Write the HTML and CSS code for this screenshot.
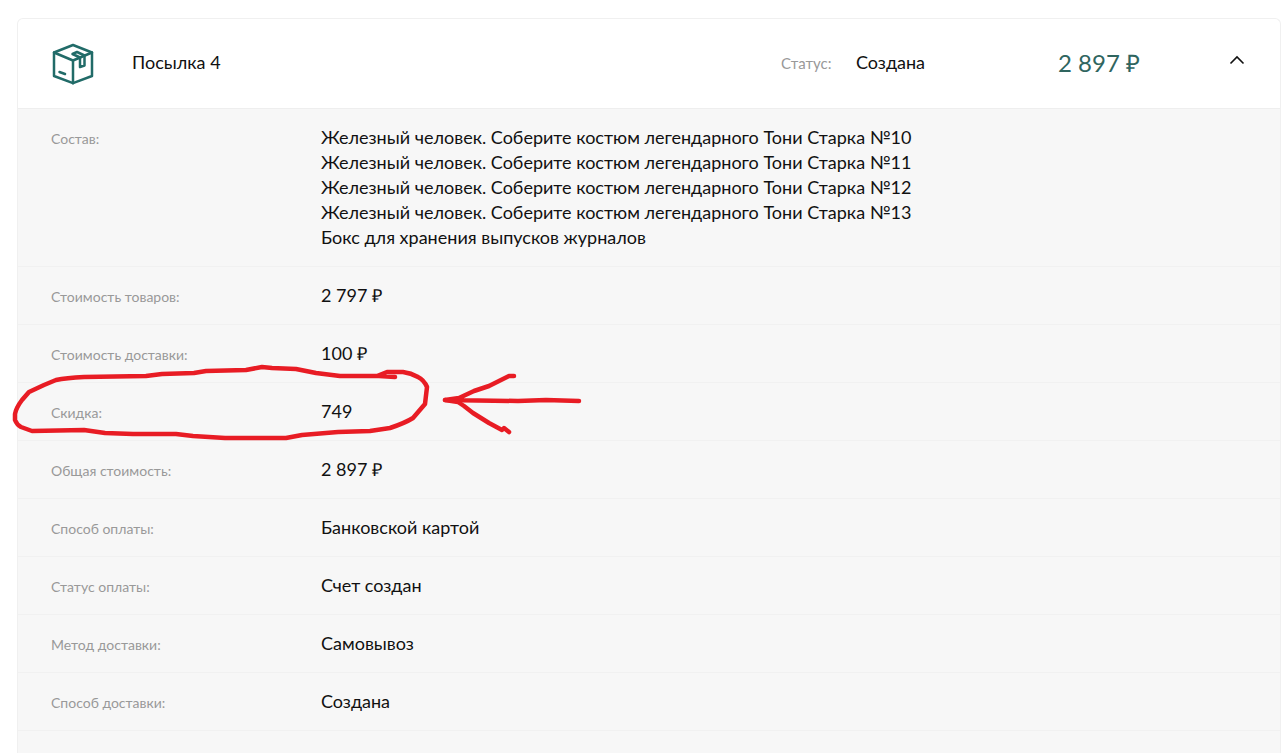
FILE: index.html
```html
<!DOCTYPE html>
<html lang="ru">
<head>
<meta charset="UTF-8">
<meta name="viewport" content="width=device-width, initial-scale=1.0">
<title>Посылка 4</title>
<link rel="stylesheet" href="styles.css">
</head>
<body>
<section class="parcel">
	<header class="parcel-head">
		<svg class="box-icon" viewBox="0 -1 44 44" aria-hidden="true">
			<path d="M22 3 L41 10.5 V34 L22 41.2 L3 34 V10.5 Z"/>
			<path d="M3 10.5 L22 18.5 L41 10.5 M22 18.5 V41.2"/>
			<path d="M29 15.5 L21.5 12 L26 10 L33.5 13.5 V23.5 L29 25 Z"/>
			<path d="M8.5 30 L14 32"/>
		</svg>
		<h1 class="parcel-title">Посылка 4</h1>
		<span class="label">Статус:</span>
		<span class="status">Создана</span>
		<span class="price">2 897 ₽</span>
		<button type="button" class="toggle" aria-label="Свернуть" aria-expanded="true">
			<svg viewBox="0 0 16 16" aria-hidden="true"><path d="M1.5 8.5 L8 2 L14.5 8.5"/></svg>
		</button>
	</header>
	<dl class="details">
		<div class="row">
			<dt class="label">Состав:</dt>
			<dd>
				Железный человек. Соберите костюм легендарного Тони Старка №10<br>
				Железный человек. Соберите костюм легендарного Тони Старка №11<br>
				Железный человек. Соберите костюм легендарного Тони Старка №12<br>
				Железный человек. Соберите костюм легендарного Тони Старка №13<br>
				Бокс для хранения выпусков журналов
			</dd>
		</div>
		<div class="row"><dt class="label">Стоимость товаров:</dt><dd>2 797 ₽</dd></div>
		<div class="row"><dt class="label">Стоимость доставки:</dt><dd>100 ₽</dd></div>
		<div class="row marked">
			<dt class="label">Скидка:</dt>
			<dd>749
				<!-- hand-drawn loop and arrow -->
				<svg class="marker" viewBox="10 363 580 80" aria-hidden="true">
					<path d="M395 377 L379 376 L340 376 L316 373 L296 369 L272 368 L262 367 L246 370 L206 371 L194 373 L162 374 L146 376 L84 377 Q66 378 56 380 L44 385 L29 392 L22 400 Q16 408 15 414 L15 420 Q17 425 21 427 L32 431 L84 430 L105 433 L133 434 L176 434 L193 436 L225 438 L286 438 L302 435 L338 432 L370 431 L390 428 Q405 423 413 418 L425 404 L427 387 Q424 380 418 377 Q411 373 403 372 L387 372 L377 376"/>
					<path d="M579 401 L546 400 L518 401 L445 400 L459 398 L474 391 L489 386 L505 378 L509 376 L514 376"/>
					<path d="M445 400 L458 402 L464 406 L473 413 L481 418 L489 423 L502 430 L504 428 L509 432"/>
				</svg>
			</dd>
		</div>
		<div class="row"><dt class="label">Общая стоимость:</dt><dd>2 897 ₽</dd></div>
		<div class="row"><dt class="label">Способ оплаты:</dt><dd>Банковской картой</dd></div>
		<div class="row"><dt class="label">Статус оплаты:</dt><dd>Счет создан</dd></div>
		<div class="row"><dt class="label">Метод доставки:</dt><dd>Самовывоз</dd></div>
		<div class="row"><dt class="label">Способ доставки:</dt><dd>Создана</dd></div>
	</dl>
</section>
</body>
</html>
```
FILE: styles.css
```css
* {
	box-sizing: border-box;
}
body {
	display: flex;
	flex-direction: column;
	min-height: 100vh;
	margin: 0;
	padding: 18px 6px 0 17px;
	background: #fff;
	color: #111;
	font: 18px/25px Lato, "Open Sans", sans-serif;
}
.parcel {
	display: flex;
	flex: 1;
	flex-direction: column;
	border: 1px solid #f0f0f0;
	border-bottom: 0;
	border-radius: 6px 6px 0 0;
}
.parcel-head {
	display: grid;
	grid-template-columns: 81px 1fr 75px 202px 171px 16px;
	align-items: center;
	height: 90px;
	padding: 0 35px 2px 33px;
	border-bottom: 1px solid #eee;
}
.box-icon {
	width: 44px;
	height: 44px;
	fill: none;
	stroke: #216b68;
	stroke-width: 2.5;
	stroke-linejoin: round;
	stroke-linecap: round;
}
.parcel-title {
	margin: 0;
	font-size: 18px;
	font-weight: 400;
}
.label {
	color: #999;
	font-size: 14px;
}
.parcel-head .label {
	padding-top: 2px;
	font-size: 15px;
}
.price {
	color: #2f655f;
	font-size: 24px;
}
.toggle {
	width: 16px;
	height: 16px;
	padding: 0;
	border: 0;
	background: none;
	cursor: pointer;
}
.toggle svg {
	display: block;
	fill: none;
	stroke: #111;
	stroke-width: 1.6;
}
.details {
	flex: 1;
	margin: 0;
	background: #f7f7f7;
}
.row {
	display: grid;
	grid-template-columns: 270px 1fr;
	padding: 16px 33px;
	border-bottom: 1px solid #f1f1f1;
}
.row .label {
	line-height: 27px;
	margin-bottom: -2px;
}
.row dd {
	margin: 0;
}
.marked {
	position: relative;
}
.marker {
	position: absolute;
	top: -20px;
	left: -8px;
	width: 580px;
	height: 80px;
	fill: none;
	stroke: #e81c24;
	stroke-width: 4.5;
	stroke-linejoin: round;
	stroke-linecap: round;
	pointer-events: none;
}
```
